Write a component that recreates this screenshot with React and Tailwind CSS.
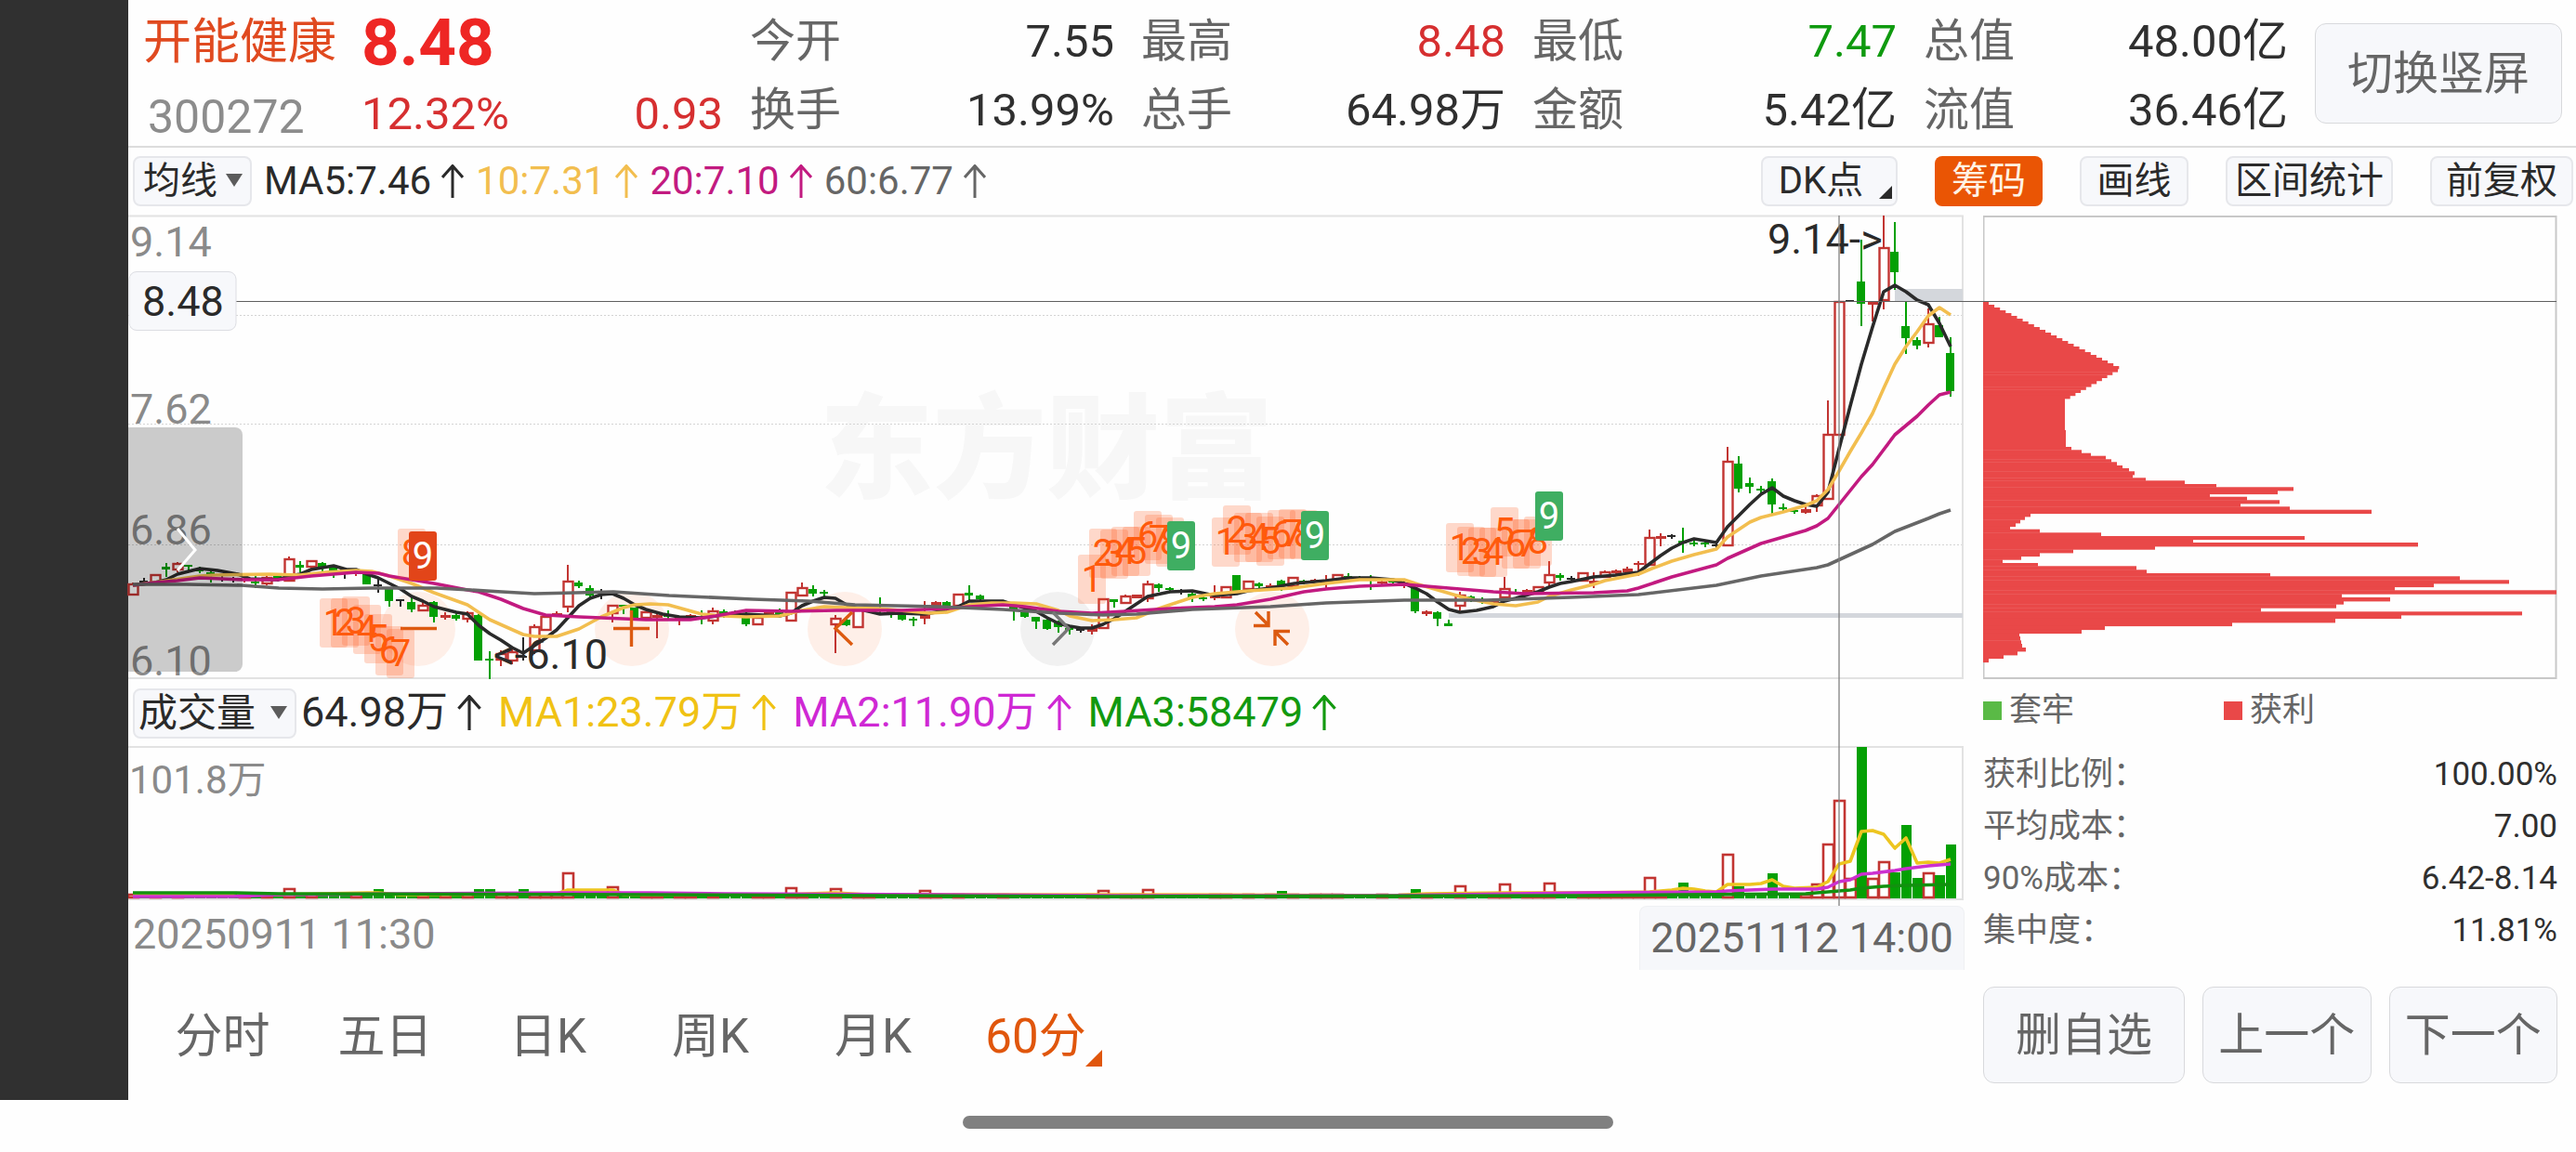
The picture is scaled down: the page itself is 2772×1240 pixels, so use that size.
import React, { useState } from 'react';

const UP = '#c23532';
const DOWN = '#04a004';
const FLAT = '#2a2a2a';

// Candles, one per hour: [kind, bodyTop, bodyBottom, high, low]
const CANDLES = [
  ['r', 629, 640, 627, 640], ['k', 625, 627, 622, 629], ['r', 619, 627, 618, 628], ['g', 610, 613, 606, 621],
  ['r', 607, 613, 605, 616], ['g', 608, 610, 608, 615], ['g', 612, 615, 610, 617], ['g', 616, 618, 615, 627],
  ['k', 622, 624, 620, 626], ['k', 623, 625, 621, 627], ['r', 623, 625, 621, 627], ['g', 626, 628, 620, 633],
  ['r', 622, 628, 620, 630], ['g', 620, 624, 617, 626], ['r', 602, 625, 599, 625], ['g', 608, 611, 604, 616],
  ['r', 604, 610, 604, 613], ['g', 606, 611, 605, 615], ['g', 610, 616, 610, 622], ['k', 613, 615, 612, 623],
  ['r', 614, 617, 613, 620], ['g', 618, 629, 617, 629], ['k', 629, 631, 622, 638], ['g', 633, 647, 633, 653],
  ['k', 645, 647, 645, 653], ['g', 648, 656, 643, 659], ['r', 652, 657, 648, 658], ['g', 648, 664, 647, 670],
  ['r', 662, 665, 659, 667], ['g', 662, 666, 660, 668], ['r', 660, 666, 658, 670], ['g', 662, 711, 661, 711],
  ['g', 709, 711, 701, 731], ['r', 704, 710, 700, 717], ['r', 702, 711, 696, 715], ['k', 706, 708, 686, 711],
  ['r', 675, 700, 672, 704], ['r', 664, 678, 663, 679], ['r', 660, 663, 658, 664], ['r', 626, 653, 608, 659],
  ['g', 627, 631, 625, 633], ['g', 633, 641, 630, 643], ['k', 637, 639, 634, 645], ['r', 652, 660, 651, 670],
  ['g', 651, 653, 651, 661], ['g', 654, 665, 654, 666], ['r', 659, 665, 658, 666], ['r', 662, 665, 660, 687],
  ['g', 661, 664, 657, 667], ['r', 665, 667, 663, 673], ['r', 662, 665, 661, 666], ['g', 664, 666, 657, 672],
  ['r', 658, 668, 654, 672], ['g', 658, 661, 656, 665], ['g', 660, 662, 657, 664], ['g', 662, 672, 656, 674],
  ['r', 665, 672, 664, 673], ['r', 659, 661, 657, 662], ['g', 659, 661, 655, 665], ['r', 638, 668, 637, 668],
  ['r', 633, 641, 627, 642], ['g', 634, 639, 630, 642], ['g', 637, 639, 635, 642], ['r', 666, 672, 662, 703],
  ['g', 667, 673, 666, 674], ['r', 656, 675, 655, 675], ['r', 654, 656, 653, 657], ['g', 654, 656, 643, 660],
  ['g', 656, 660, 655, 665], ['g', 661, 667, 660, 668], ['g', 666, 668, 664, 674], ['r', 662, 666, 647, 672],
  ['r', 648, 652, 647, 653], ['g', 648, 652, 647, 653], ['r', 640, 652, 639, 652], ['g', 638, 641, 630, 646],
  ['g', 641, 645, 640, 646], ['g', 647, 649, 646, 652], ['r', 648, 650, 646, 651], ['g', 652, 656, 651, 668],
  ['g', 658, 664, 657, 665], ['g', 664, 669, 664, 677], ['g', 667, 677, 666, 678], ['g', 669, 675, 668, 681],
  ['g', 676, 678, 674, 683], ['k', 677, 679, 676, 681], ['r', 676, 680, 672, 683], ['r', 645, 676, 644, 677],
  ['g', 645, 648, 645, 654], ['r', 642, 649, 640, 650], ['r', 640, 644, 640, 644], ['r', 629, 644, 625, 648],
  ['g', 629, 633, 628, 637], ['g', 633, 635, 632, 637], ['k', 635, 637, 634, 640], ['g', 639, 643, 638, 648],
  ['g', 643, 645, 642, 647], ['r', 642, 644, 630, 646], ['r', 632, 643, 631, 644], ['g', 619, 636, 619, 636],
  ['r', 626, 634, 625, 635], ['g', 628, 631, 627, 634], ['r', 630, 632, 628, 633], ['g', 625, 630, 624, 636],
  ['r', 622, 631, 621, 632], ['g', 625, 628, 624, 629], ['r', 624, 626, 623, 627], ['r', 624, 628, 619, 633],
  ['r', 619, 624, 618, 625], ['g', 620, 622, 617, 625], ['g', 621, 623, 620, 624], ['g', 623, 625, 619, 635],
  ['r', 626, 628, 624, 630], ['g', 625, 627, 623, 628], ['r', 627, 629, 625, 633], ['g', 633, 658, 632, 660],
  ['r', 658, 661, 657, 663], ['g', 659, 666, 658, 674], ['g', 671, 674, 667, 674], ['r', 641, 652, 637, 657],
  ['g', 642, 644, 641, 648], ['g', 645, 647, 643, 650], ['r', 647, 649, 645, 651], ['r', 634, 643, 621, 644],
  ['g', 637, 639, 634, 640], ['r', 635, 638, 634, 639], ['r', 632, 637, 631, 638], ['r', 619, 627, 604, 631],
  ['g', 619, 622, 617, 625], ['k', 622, 624, 620, 626], ['r', 617, 625, 616, 626], ['r', 625, 628, 616, 633],
  ['r', 616, 621, 614, 622], ['r', 614, 617, 613, 618], ['r', 612, 616, 610, 617], ['r', 606, 608, 604, 620],
  ['r', 579, 608, 570, 609], ['r', 577, 580, 574, 588], ['k', 576, 578, 575, 580], ['g', 582, 585, 568, 595],
  ['g', 584, 586, 582, 588], ['g', 584, 586, 582, 589], ['k', 586, 588, 583, 590], ['r', 497, 587, 481, 587],
  ['g', 499, 526, 491, 530], ['g', 520, 524, 514, 531], ['g', 526, 528, 523, 532], ['g', 518, 543, 515, 553],
  ['g', 546, 548, 542, 551], ['g', 549, 551, 546, 553], ['r', 548, 552, 545, 553], ['r', 534, 544, 532, 551],
  ['r', 468, 537, 431, 538], ['r', 325, 468, 324, 468], ['k', 323, 325, 323, 325], ['g', 303, 327, 258, 351],
  ['r', 324, 328, 324, 346], ['r', 267, 323, 232, 333], ['g', 271, 293, 239, 312], ['g', 351, 364, 325, 381],
  ['g', 366, 372, 363, 376], ['r', 349, 369, 332, 374], ['g', 350, 363, 341, 363], ['g', 380, 421, 363, 427],
];

const candleX = (i) => 143 + 12 * i;

const MA_LINES = [
  {
    color: '#2a2a2a',
    points: '143,630 167,627 179,624 191,618 203,615 215,612 234,614 256,618 269,623 299,624 311,620 323,618 335,613 359,609 373,613 383,613 395,618 407,622 419,628 431,634 443,642 455,647 467,653 491,659 503,661 515,673 527,682 539,689 551,697 563,703 575,695 587,687 599,678 611,665 623,652 635,644 647,640 659,639 671,644 683,651 695,656 713,661 731,664 755,665 779,662 803,661 839,663 851,660 863,652 875,647 887,643 899,644 911,651 926,656 947,661 968,660 995,661 1019,657 1031,653 1043,647 1061,647 1079,647 1091,651 1115,658 1127,665 1139,671 1151,674 1163,676 1175,676 1187,672 1199,666 1211,658 1223,650 1235,642 1259,637 1283,636 1307,641 1331,639 1343,636 1367,633 1393,628 1427,625 1451,622 1475,622 1499,624 1511,628 1523,633 1535,639 1547,648 1559,656 1571,659 1589,657 1607,653 1619,647 1631,644 1655,637 1667,632 1679,628 1691,626 1715,621 1739,619 1763,616 1775,607 1787,598 1799,590 1811,584 1823,580 1835,582 1847,584 1859,567 1871,555 1883,543 1895,532 1907,525 1919,534 1931,539 1943,543 1955,545 1967,530 1979,483 1991,437 2003,392 2015,352 2027,314 2039,307 2051,314 2063,323 2075,328 2087,348 2099,373',
  },
  {
    color: '#f2be4f',
    points: '143,630 180,625 215,620 230,619 290,618 323,619 350,616 383,614 400,615 419,620 443,628 467,638 503,651 527,667 563,683 575,685 599,685 623,677 647,664 671,654 683,651 700,650 719,651 755,661 779,663 803,664 839,663 851,660 863,657 887,653 911,654 947,655 1000,660 1019,659 1043,651 1067,649 1091,649 1115,650 1139,657 1151,663 1175,668 1199,667 1223,665 1247,655 1283,643 1307,639 1343,636 1391,633 1427,628 1463,624 1511,624 1523,628 1547,635 1571,642 1583,645 1607,650 1631,652 1655,648 1667,642 1691,635 1715,629 1727,625 1763,618 1775,613 1799,604 1823,597 1847,591 1859,578 1883,562 1895,557 1919,551 1943,544 1955,539 1967,527 1979,507 1991,486 2003,466 2015,445 2027,418 2039,392 2051,373 2063,357 2075,340 2087,331 2099,339',
  },
  {
    color: '#c21a80',
    points: '143,630 167,627 191,625 215,622 263,624 299,624 335,620 383,616 407,617 419,620 467,628 503,635 515,637 539,645 563,655 587,662 623,664 695,667 743,667 770,663 803,657 851,658 900,657 970,657 1019,655 1043,653 1079,651 1103,653 1139,658 1175,660 1211,658 1259,655 1307,653 1331,651 1367,645 1403,637 1427,634 1463,631 1511,629 1535,631 1571,634 1607,637 1640,639 1715,638 1751,636 1763,633 1799,621 1847,608 1859,601 1895,585 1943,571 1955,566 1967,558 1979,543 2003,513 2015,500 2027,484 2039,468 2063,448 2075,436 2087,425 2099,422',
  },
  {
    color: '#666666',
    points: '143,629 200,629 260,630 300,633 347,634 400,633 470,633 540,637 575,639 620,638 660,637 720,641 810,645 870,647 920,651 1010,653 1079,656 1139,660 1187,662 1223,661 1283,656 1367,653 1427,649 1511,646 1600,646 1690,643 1763,640 1847,630 1895,620 1955,611 1967,608 2015,586 2039,572 2075,558 2087,553 2099,549',
  },
];

// Nine-turn counters: first candle index and the top of each box
const TURNS = [
  { start: 18, tops: [644, 644, 642, 651, 661, 674, 677, 569, 572], fill: '#e24519' },
  { start: 86, tops: [597, 569, 570, 567, 567, 550, 554, 557, 561], fill: '#3fae62' },
  { start: 98, tops: [557, 544, 552, 552, 556, 549, 548, 549, 550], fill: '#3fae62' },
  { start: 119, tops: [563, 567, 568, 568, 546, 559, 559, 556, 529], fill: '#3fae62' },
];

const PRICE_LABELS = [
  { y: 276, text: '9.14' },
  { y: 456, text: '7.62' },
  { y: 586, text: '6.86' },
  { y: 727, text: '6.10' },
];

// Tops of the volume bars that rise above the floor, by candle index
const VOLUME_TOPS = {
  14: 957, 22: 957, 31: 957, 32: 957, 35: 957, 39: 940, 43: 955, 59: 956, 63: 957, 71: 959,
  87: 959, 91: 958, 103: 959, 115: 957, 119: 954, 123: 952, 127: 951, 136: 945, 139: 950, 143: 920,
  144: 954, 147: 940, 151: 952, 152: 909, 153: 862, 154: 946, 155: 804, 156: 946, 157: 928, 158: 939,
  159: 888, 160: 945, 161: 940, 162: 942, 163: 909,
};

const VOLUME_LINES = [
  {
    color: '#edc520',
    points: '143,963 300,963 395,961 407,961 430,963 599,962 611,958 659,958 671,963 839,963 899,961 935,963 1240,963 1500,964 1535,962 1619,961 1700,961 1775,960 1799,958 1811,956 1823,957 1835,959 1847,960 1859,952 1883,952 1895,951 1907,947 1919,954 1931,956 1955,955 1967,949 1979,930 1991,927 2003,895 2015,894 2027,898 2039,913 2051,902 2063,929 2075,928 2087,929 2099,925',
  },
  {
    color: '#cc30d0',
    points: '143,965 251,965 299,963 611,961 700,961 780,962 1200,964 1500,964 1700,961 1847,960 1859,959 1907,957 1955,957 1967,955 1979,949 1991,947 2003,941 2015,940 2039,937 2051,935 2075,932 2099,930',
  },
  {
    color: '#12900f',
    points: '143,961 251,961 300,962 700,963 1200,965 1700,964 1943,962 1967,960 1991,958 2003,956 2027,954 2051,953 2099,952',
  },
];

// Chip distribution rows: [offset from the top of the panel, length]
const CHIPS = [
  ...Array.from({ length: 24 }, (_, i) => [93 + 3 * i, 6 + 6.1 * i]),
  ...Array.from({ length: 10 }, (_, i) => [165 + 3.2 * i, 145 - 5.7 * i]),
  [197, 88], [231, 89], [249, 95], [252.3, 106], [255.7, 116], [258.7, 132], [262.3, 138], [265.3, 144],
  [269, 150], [272, 157], [275.3, 163], [279, 161], [282.3, 175], [285.3, 217], [289, 251], [292.3, 334],
  [296, 317], [299.7, 244], [302.7, 284], [306.3, 319], [310, 277], [313.3, 330], [316.7, 418], [320.7, 51],
  [324, 45], [327.3, 40], [331, 35], [334.7, 29], [337.7, 61], [341.3, 127], [345, 346], [348.7, 226],
  [352, 468], [356, 185], [359.3, 97], [363, 61], [366.7, 41], [370.3, 21], [374, 59], [377.3, 165],
  [381.3, 176], [385, 309], [388.3, 513], [392.3, 566], [396, 485], [399.7, 443], [403.3, 617], [407.3, 386],
  [411, 438], [415, 388], [418.3, 380], [422.3, 299], [426.3, 580], [430, 450], [433.7, 379], [438, 268],
  [441.7, 131], [445.7, 106], [449.7, 39], [453, 40], [457.3, 41], [461, 42], [465, 46], [469, 37],
  [473, 22], [476.7, 6], [480.7, 0],
];

const QUOTES = [
  [{ label: '今开', value: '7.55' }, { label: '换手', value: '13.99%' }],
  [{ label: '最高', value: '8.48', color: 'text-[#d62f30]' }, { label: '总手', value: '64.98万' }],
  [{ label: '最低', value: '7.47', color: 'text-[#0f9a0f]' }, { label: '金额', value: '5.42亿' }],
  [{ label: '总值', value: '48.00亿' }, { label: '流值', value: '36.46亿' }],
];

const CHIP_STATS = [
  { label: '获利比例：', value: '100.00%' },
  { label: '平均成本：', value: '7.00' },
  { label: '90%成本：', value: '6.42-8.14' },
  { label: '集中度：', value: '11.81%' },
];

const PERIODS = ['分时', '五日', '日K', '周K', '月K', '60分'];

const UpArrow = ({ className }) => (
  <svg viewBox="0 0 24 36" className={className} fill="none" stroke="currentColor" strokeWidth="3" aria-hidden="true">
    <path d="M12 36V2M1 14L12 1.5L23 14" />
  </svg>
);

const Corner = ({ className }) => (
  <svg viewBox="0 0 16 16" className={className} fill="currentColor" aria-hidden="true">
    <path d="M16 0V16H0Z" />
  </svg>
);

const Picker = ({ label, option, className, selectClass }) => (
  <div className={`relative ${className}`}>
    <select
      aria-label={label}
      className={`h-[54px] w-full appearance-none rounded-lg border-2 border-[#e6e7eb] bg-[#f7f8fb] text-[#2a2a2a] ${selectClass}`}
    >
      <option>{option}</option>
    </select>
    <svg viewBox="0 0 18 14" className="pointer-events-none absolute right-[10px] top-[20px] h-[14px] w-[18px]" fill="#5c5c5c" aria-hidden="true">
      <path d="M0 0H18L9 14Z" />
    </svg>
  </div>
);

const Candle = ({ index, data }) => {
  const [kind, top, bottom, high, low] = data;
  const x = candleX(index);
  const color = kind === 'r' ? UP : kind === 'g' ? DOWN : FLAT;
  const hollow = kind === 'r' && bottom - top > 4;
  return (
    <g>
      {high < top && <rect x={x - 1} y={high} width="2" height={top - high} fill={color} />}
      {low > bottom && <rect x={x - 1} y={bottom} width="2" height={low - bottom} fill={color} />}
      {hollow ? (
        <rect x={x - 4.5} y={top} width="10" height={bottom - top} fill="#fff" stroke={color} strokeWidth="2.4" />
      ) : (
        <rect x={x - 5} y={top} width={kind === 'r' ? 11 : 9} height={bottom - top} fill={color} />
      )}
    </g>
  );
};

const Turn = ({ start, tops, fill }) => (
  <g fontSize="40" textAnchor="middle">
    {tops.map((top, i) => {
      const x = candleX(start + i);
      const last = i === 8;
      return (
        <g key={i}>
          <rect x={x - 15} y={top} width="30" height="53" rx="3" fill={last ? fill : '#ff5a1e'} fillOpacity={last ? 1 : 0.23} />
          <text x={x} y={top + 40} fill={last ? '#fff' : '#ff5a0a'}>{i + 1}</text>
        </g>
      );
    })}
  </g>
);

const PriceChart = () => (
  <svg viewBox="138 232 1976 500" className="pointer-events-none relative z-10 block h-auto w-full overflow-visible font-[Roboto,'Noto_Sans_CJK_SC',sans-serif]">
    <text x="882" y="526" fontSize="122" fontWeight="900" fill="#f7f7f7">东方财富</text>
    <g stroke="#d4d4d4" strokeWidth="1" strokeDasharray="2 2">
      <path d="M138 339.5H2112M138 456.5H2112M138 586.5H2112" />
    </g>
    <path d="M138 232.5H2112V730H138" fill="none" stroke="#e2e2e2" strokeWidth="2" />

    {/* Gaps left open */}
    <rect x="2039" y="311" width="73" height="13" fill="#d4d7dc" />
    <rect x="1559" y="660" width="553" height="5" fill="#d4d7dc" />

    {/* Signal circles */}
    <g fill="#ff7a33" fillOpacity="0.11">
      <circle cx="450" cy="677" r="40" />
      <circle cx="680" cy="677" r="40" />
      <circle cx="909" cy="677" r="40" />
      <circle cx="1369" cy="677" r="40" />
    </g>
    <circle cx="1138" cy="677" r="40" fill="#000" fillOpacity="0.05" />

    {PRICE_LABELS.map((label) => (
      <text key={label.text} x="140" y={label.y} fontSize="45" fill="#8a8a8a">{label.text}</text>
    ))}

    {CANDLES.map((data, i) => <Candle key={i} index={i} data={data} />)}

    {MA_LINES.map((line) => (
      <polyline key={line.color} points={line.points} fill="none" stroke={line.color} strokeWidth="3.6" strokeLinejoin="round" />
    ))}

    <g fill="none" stroke="#dc5a10" strokeWidth="3.4">
      <path d="M431 676.5H470M660 676.5H699M679.5 657V696" />
      <path d="M917 659L899 676.5L917 694" />
      <path d="M1351 659L1365 673M1349 673.5H1365V658M1372 695V679.5H1388M1372 680L1386 694" />
    </g>
    <path d="M1133 659L1150 676.5L1133 694" fill="none" stroke="#777" strokeWidth="3.4" />

    {TURNS.map((turn) => <Turn key={turn.start} {...turn} />)}

    <g fontSize="45" fill="#2a2a2a">
      <text x="531" y="720">&lt;-6.10</text>
      <text x="1902" y="273">9.14-&gt;</text>
    </g>

    {/* Drawer handle */}
    <path d="M138 460H253a8 8 0 0 1 8 8V715a8 8 0 0 1 -8 8H138Z" fill="#000" fillOpacity="0.2" />
    <path d="M191 569L210 592L191 614" fill="none" stroke="#fff" strokeWidth="3" />

    {/* Crosshair */}
    <path d="M254 324.5H2751" stroke="#606060" strokeWidth="1" />
    <path d="M1979 232V975" stroke="#808080" strokeOpacity="0.65" strokeWidth="2" />
    <rect x="139" y="292.5" width="115" height="63" rx="8" fill="#f7f8fb" stroke="#dcdde2" />
    <text x="153" y="340" fontSize="45" fill="#2a2a2a">8.48</text>
  </svg>
);

const VolumeChart = () => (
  <svg viewBox="138 803 1976 170" className="block h-auto w-full font-[Roboto,'Noto_Sans_CJK_SC',sans-serif]">
    <path d="M138 804H2112V968H138" fill="none" stroke="#e2e2e2" strokeWidth="2" />
    <text x="139" y="854" fontSize="42" fill="#8a8a8a">101.8万</text>
    {CANDLES.map(([kind], i) => {
      const top = VOLUME_TOPS[i] || 963;
      const x = candleX(i);
      const red = i === 154 || kind === 'r';
      return red ? (
        <rect key={i} x={x - 5} y={top} width="11" height={966 - top} fill="#fff" stroke={UP} strokeWidth="2.6" />
      ) : (
        <rect key={i} x={x - 5} y={top} width="11" height={967 - top} fill={DOWN} />
      );
    })}
    {VOLUME_LINES.map((line) => (
      <polyline key={line.color} points={line.points} fill="none" stroke={line.color} strokeWidth="3.6" strokeLinejoin="round" />
    ))}
  </svg>
);

const ChipChart = () => (
  <svg viewBox="0 0 618 500" className="block h-auto w-full">
    <rect x="0.5" y="1" width="616" height="497" fill="none" stroke="#c8c8c8" strokeWidth="2" />
    {CHIPS.slice(0, -1).map(([y, width], i) => (
      <rect key={y} x="0" y={y} width={width} height={CHIPS[i + 1][0] - y + 0.4} fill="#e94848" />
    ))}
  </svg>
);

const MaValue = ({ children, className, arrow }) => (
  <span className={`flex items-center ${className}`}>
    {children}
    <UpArrow className={arrow} />
  </span>
);

const App = () => {
  const [period, setPeriod] = useState('60分');

  return (
    <div className="min-h-screen bg-[#fefefe] font-[Roboto,'Noto_Sans_CJK_SC',sans-serif] text-[#2f2f2f]">
      <div className="flex">
        <aside className="w-[138px] shrink-0 bg-[#303030]" />

        <main className="min-w-0 flex-1">
          {/* Quote header */}
          <header className="flex h-[159px] items-start border-b-2 border-[#dcdcdc] pl-[16px] pr-[15px] whitespace-nowrap">
            <div className="mr-[29px] grid flex-1 grid-cols-[235px_1fr]">
              <h1 className="text-[52px] leading-[92px] text-[#e04a20]">开能健康</h1>
              <strong className="text-[71px] leading-[92px] text-[#ee2624]">8.48</strong>
              <span className="pl-[5px] text-[50px] leading-[68px] text-[#8c8c8c]">300272</span>
              <div className="flex justify-between text-[49px] leading-[62px] text-[#d62f30]">
                <span>12.32%</span>
                <span>0.93</span>
              </div>
            </div>
            <div className="flex gap-[29px] pt-[8px]">
              {QUOTES.map((column) => (
                <dl key={column[0].label} className="w-[392px]">
                  {column.map((item) => (
                    <div key={item.label} className="flex h-[74px] items-center justify-between">
                      <dt className="text-[49px] leading-[72px] text-[#666]">{item.label}</dt>
                      <dd className={`text-[49px] leading-[72px] ${item.color || ''}`}>{item.value}</dd>
                    </div>
                  ))}
                </dl>
              ))}
            </div>
            <button type="button" className="ml-[29px] mt-[25px] h-[108px] w-[266px] rounded-xl border border-[#d8d9dc] bg-[#f7f8fb] pt-[2px] text-[49px] text-[#666]">
              切换竖屏
            </button>
          </header>

          {/* Indicator bar */}
          <div className="flex h-[73px] items-center justify-between pl-[5px] pr-[3px] pb-[2px] whitespace-nowrap">
            <div className="flex items-center text-[42px] leading-[54px]">
              <Picker label="均线" option="均线" className="mr-[13px] w-[128px]" selectClass="pl-[9px] text-[40px] leading-[48px]" />
              <div className="flex gap-[13px]">
                <MaValue arrow="ml-[11px] h-[36px] w-[24px]" className="text-[#2a2a2a]">MA5:7.46</MaValue>
                <MaValue arrow="ml-[11px] h-[36px] w-[24px]" className="text-[#f2be4f]">10:7.31</MaValue>
                <MaValue arrow="ml-[11px] h-[36px] w-[24px]" className="text-[#c21a80]">20:7.10</MaValue>
                <MaValue arrow="ml-[11px] h-[36px] w-[24px]" className="text-[#666]">60:6.77</MaValue>
              </div>
            </div>
            <div className="flex gap-[40px] text-[40px] leading-[50px] text-[#2a2a2a]">
              <button type="button" className="relative h-[54px] w-[147px] rounded-lg border-2 border-[#e6e7eb] bg-[#f7f8fb] pr-[18px]">
                DK点
                <Corner className="absolute bottom-[6px] right-[4px] h-[14px] w-[14px]" />
              </button>
              <button type="button" className="h-[54px] w-[116px] rounded-lg bg-[#ea5504] text-[#fff3e4]">筹码</button>
              <button type="button" className="h-[54px] w-[117px] rounded-lg border-2 border-[#e6e7eb] bg-[#f7f8fb]">画线</button>
              <button type="button" className="h-[54px] w-[180px] rounded-lg border-2 border-[#e6e7eb] bg-[#f7f8fb]">区间统计</button>
              <button type="button" className="h-[54px] w-[154px] rounded-lg border-2 border-[#e6e7eb] bg-[#f7f8fb]">前复权</button>
            </div>
          </div>

          <div className="flex gap-[20px]">
            <section className="min-w-0 flex-1">
              <PriceChart />

              <div className="flex h-[71px] items-center pl-[5px] pb-[1px] text-[45px] leading-[54px] whitespace-nowrap">
                <Picker label="成交量" option="成交量" className="mr-[5px] w-[176px]" selectClass="pl-[4px] text-[42px] leading-[50px]" />
                <div className="flex gap-[18px]">
                  <MaValue arrow="ml-[10px] h-[38px] w-[26px]" className="text-[#2a2a2a]">64.98万</MaValue>
                  <MaValue arrow="ml-[10px] h-[38px] w-[26px]" className="text-[#f0c214]">MA1:23.79万</MaValue>
                  <MaValue arrow="ml-[10px] h-[38px] w-[26px]" className="text-[#cf28d4]">MA2:11.90万</MaValue>
                  <MaValue arrow="ml-[10px] h-[38px] w-[26px]" className="text-[#12990f]">MA3:58479</MaValue>
                </div>
              </div>

              <VolumeChart />

              <div className="flex h-[71px] items-start justify-between pl-[5px] pt-[2px] text-[45px]">
                <time className="leading-[62px] text-[#8a8a8a]">20250911 11:30</time>
                <time className="w-[350px] rounded-t-lg border border-b-0 border-[#eff0f3] bg-[#f6f7fa] text-center leading-[68px] text-[#666]">20251112 14:00</time>
              </div>

              <nav className="flex h-[140px] items-center pl-[14px] pt-[4px] text-[51px] leading-[60px] text-[#666]">
                {PERIODS.map((name) => (
                  <button
                    key={name}
                    type="button"
                    onClick={() => setPeriod(name)}
                    className={`relative w-[175px] ${period === name ? 'text-[#e0560c]' : ''}`}
                  >
                    {name}
                    {name === '60分' && <Corner className="absolute -bottom-[2px] right-[16px] h-[18px] w-[18px]" />}
                  </button>
                ))}
              </nav>
            </section>

            {/* Chip distribution */}
            <section className="w-[638px] shrink-0 pr-[20px] text-[35px]">
              <ChipChart />
              <ul className="grid h-[66px] grid-cols-[259px_1fr] items-center text-[#666]">
                <li className="flex items-center gap-[8px]">
                  <span className="h-[20px] w-[20px] bg-[#5aba46]" />
                  套牢
                </li>
                <li className="flex items-center gap-[8px]">
                  <span className="h-[20px] w-[20px] bg-[#e94848]" />
                  获利
                </li>
              </ul>
              <dl className="pt-[8px]">
                {CHIP_STATS.map((stat) => (
                  <div key={stat.label} className="flex h-[56px] items-center justify-between">
                    <dt className="text-[#666]">{stat.label}</dt>
                    <dd>{stat.value}</dd>
                  </div>
                ))}
              </dl>
              <div className="mt-[32px] flex gap-[19px] text-[49px] text-[#666]">
                <button type="button" className="h-[104px] w-[217px] rounded-xl border border-[#d8d9dc] bg-[#f7f8fb] pt-[2px]">删自选</button>
                <button type="button" className="h-[104px] flex-1 rounded-xl border border-[#d8d9dc] bg-[#f7f8fb] pt-[2px]">上一个</button>
                <button type="button" className="h-[104px] flex-1 rounded-xl border border-[#d8d9dc] bg-[#f7f8fb] pt-[2px]">下一个</button>
              </div>
            </section>
          </div>
        </main>
      </div>

      <footer className="flex h-[56px] justify-center pt-[17px]">
        <div className="h-[14px] w-[700px] rounded-full bg-[#808080]" />
      </footer>
    </div>
  );
};

export default App;
